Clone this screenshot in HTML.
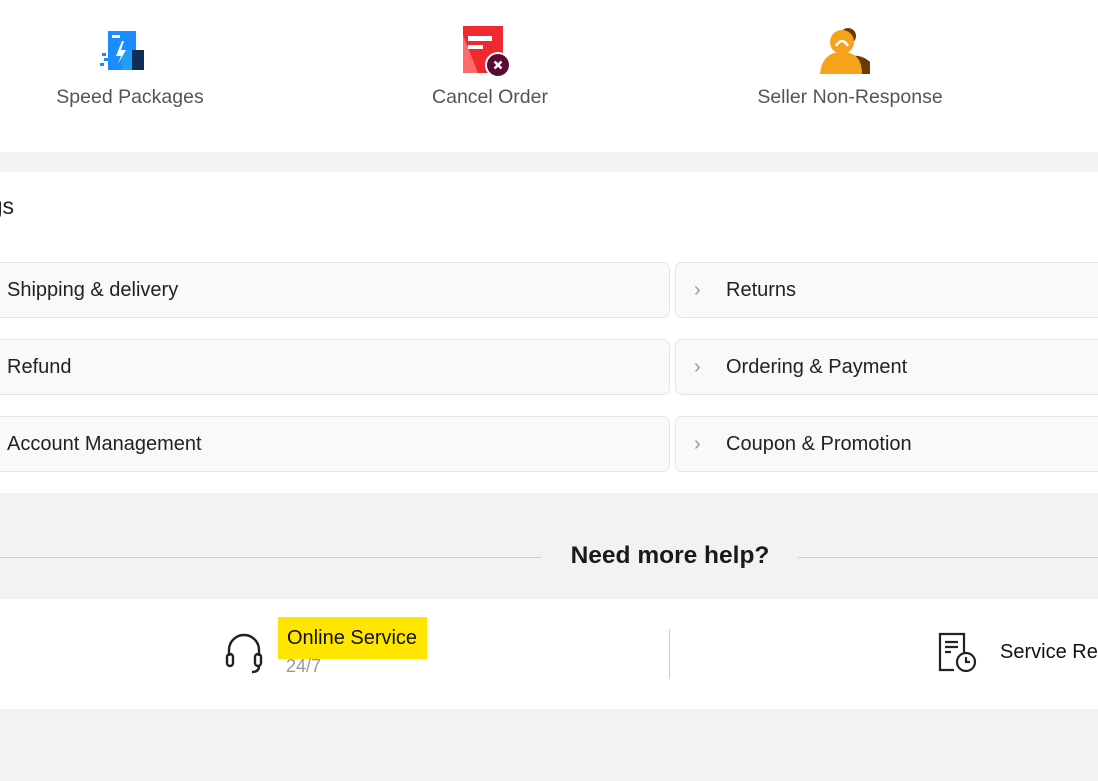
<!DOCTYPE html>
<html><head><meta charset="utf-8"><style>
*{margin:0;padding:0;box-sizing:border-box}
body{width:1098px;height:781px;overflow:hidden;background:#f2f2f2;font-family:"Liberation Sans",sans-serif;position:relative;color:#222}
.a{position:absolute}
.card{position:absolute;height:56px;background:#f9f9f9;border:1px solid #e6e6e6;border-radius:7px;font-size:20px;color:#222;line-height:54px;white-space:nowrap}
.lbl{position:absolute;font-size:19.5px;color:#555;transform:translateX(-50%);white-space:nowrap;top:86px}
.arr{position:absolute;left:18px;top:0;color:#999;font-size:20px;font-weight:300}
</style></head><body>
<div class="a" style="left:0;top:0;width:1098px;height:152px;background:#fff"></div>
<div class="a" style="left:0;top:172px;width:1098px;height:321px;background:#fff"></div>
<div class="a" style="left:0;top:599px;width:1098px;height:110px;background:#fff"></div>

<svg class="a" style="left:100px;top:28px" width="52" height="46" viewBox="0 0 52 46">
<rect x="8" y="3" width="28" height="39" fill="#1a8cff"/>
<rect x="30" y="22" width="14" height="20" fill="#0e2d57"/>
<rect x="22" y="22" width="10" height="20" fill="#1fa0f5"/>
<rect x="12" y="7" width="8" height="3" fill="#fff"/>
<path d="M22 13 L16 28 L21 28 L18 36 L26 22 L21 22 L24 13Z" fill="#fff"/>
<rect x="2" y="25" width="4" height="3" fill="#1a8cff"/><rect x="4" y="30" width="4" height="3" fill="#1a8cff"/><rect x="0" y="35" width="4" height="3" fill="#1a8cff"/>
</svg>
<div class="lbl" style="left:130px">Speed Packages</div>

<svg class="a" style="left:460px;top:25px" width="52" height="52" viewBox="0 0 52 52">
<rect x="3" y="1" width="40" height="47" fill="#f0282f"/>
<path d="M3 10 L18 48 L3 48Z" fill="#ff6b6b"/>
<rect x="8" y="11" width="24" height="5" fill="#fff"/><rect x="8" y="20" width="15" height="4" fill="#fff"/>
<circle cx="38" cy="40" r="12" fill="#5a0a35" stroke="#fff" stroke-width="2"/>
<path d="M34.5 36.5 L41.5 43.5 M41.5 36.5 L34.5 43.5" stroke="#fff" stroke-width="2.5"/>
</svg>
<div class="lbl" style="left:490px">Cancel Order</div>

<svg class="a" style="left:818px;top:28px" width="54" height="48" viewBox="0 0 54 48">
<path d="M30 16 a8 8 0 1 1 0.1 0Z" fill="#6b3a0a"/>
<path d="M26 46 L30 28 Q44 26 52 34 L52 46Z" fill="#6b3a0a"/>
<circle cx="24" cy="14" r="12" fill="#f7a21b"/>
<path d="M2 46 Q4 24 24 24 Q44 24 44 46Z" fill="#f7a21b"/>
<path d="M18 18 Q24 8 30 18" stroke="#fff" stroke-width="2.5" fill="none"/>
</svg>
<div class="lbl" style="left:850px">Seller Non-Response</div>

<div class="a" style="right:1084px;top:193px;font-size:23px;color:#222">ngs</div>

<div class="card" style="left:-10px;top:262px;width:680px;padding-left:16px">Shipping &amp; delivery</div>
<div class="card" style="left:-10px;top:339px;width:680px;padding-left:16px">Refund</div>
<div class="card" style="left:-10px;top:416px;width:680px;padding-left:16px">Account Management</div>
<div class="card" style="left:675px;top:262px;width:440px;padding-left:50px"><span class="arr">›</span>Returns</div>
<div class="card" style="left:675px;top:339px;width:440px;padding-left:50px"><span class="arr">›</span>Ordering &amp; Payment</div>
<div class="card" style="left:675px;top:416px;width:440px;padding-left:50px"><span class="arr">›</span>Coupon &amp; Promotion</div>

<div class="a" style="left:0;top:557px;width:541px;height:1px;background:#ccc"></div>
<div class="a" style="left:798px;top:557px;width:300px;height:1px;background:#ccc"></div>
<div class="a" style="left:670px;top:542px;transform:translateX(-50%);font-size:24.5px;font-weight:bold;color:#1a1a1a;white-space:nowrap">Need more help?</div>

<svg class="a" style="left:224px;top:632px" width="40" height="42" viewBox="0 0 40 42" fill="none" stroke="#222" stroke-width="2.4">
<path d="M5 24 V18 A15 15 0 0 1 35 18 V24"/>
<rect x="3" y="22" width="6" height="12" rx="3"/>
<rect x="31" y="22" width="6" height="12" rx="3"/>
<path d="M35 34 Q35 40 28 40"/>
</svg>
<div class="a" style="left:278px;top:617px;width:149px;height:42px;background:#ffe600"></div>
<div class="a" style="left:287px;top:627px;font-size:20px;color:#111;white-space:nowrap">Online Service</div>
<div class="a" style="left:286px;top:656px;font-size:18px;color:#999">24/7</div>
<div class="a" style="left:669px;top:629px;width:1px;height:50px;background:#ccc"></div>

<svg class="a" style="left:936px;top:632px" width="42" height="42" viewBox="0 0 42 42" fill="none" stroke="#222" stroke-width="2.2">
<path d="M18 38 H4 V2 H28 V20"/>
<path d="M9 10 H22 M9 15 H22 M9 20 H15"/>
<circle cx="30" cy="30" r="9" fill="#fff"/>
<path d="M30 25 V30 H34"/>
</svg>
<div class="a" style="left:1000px;top:641px;font-size:20px;color:#111;white-space:nowrap">Service Records</div>
</body></html>
